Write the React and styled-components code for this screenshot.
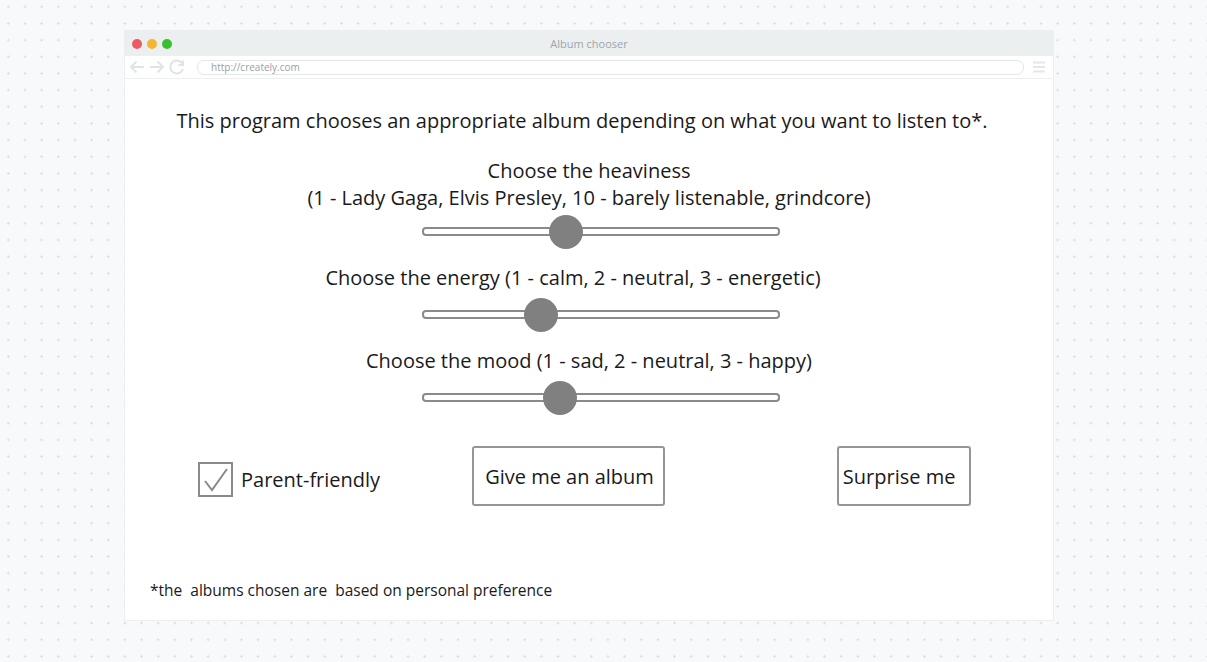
import React from "react";
import styled, { createGlobalStyle } from "styled-components";

const GlobalStyle = createGlobalStyle`
  html, body {
    margin: 0;
    padding: 0;
  }
  body {
    width: 1207px;
    height: 662px;
    overflow: hidden;
    font-family: "Open Sans", "Noto Sans", sans-serif;
    background-color: #f8f9fb;
    background-image: radial-gradient(circle, #dcdfe4 1px, transparent 1.3px);
    background-size: 16.667px 16.667px;
    background-position: 0px -1.5px;
  }
`;

const Page = styled.div`
  padding: 31px 0 0 125px;
`;

const Window = styled.div`
  width: 928px;
  height: 589px;
  background: #fff;
  box-shadow: 0 0 0 1px #eceef0;
  display: flex;
  flex-direction: column;
`;

const TitleBar = styled.div`
  height: 25px;
  background: #eceff0;
  display: flex;
  align-items: center;
  position: relative;
  padding-left: 7px;
  gap: 5px;
`;

const Light = styled.span`
  width: 10px;
  height: 10px;
  border-radius: 50%;
  background: ${(p) => p.$c};
`;

const Title = styled.div`
  position: absolute;
  left: 0;
  right: 0;
  text-align: center;
  font-size: 11px;
  color: #a0a4a6;
`;

const AddressRow = styled.div`
  height: 22px;
  border-bottom: 1px solid #eef0f0;
  display: flex;
  align-items: center;
  padding: 0 7px 0 4px;
  gap: 8px;
`;

const Address = styled.div`
  flex: 1;
  height: 13px;
  border: 1px solid #e3e7e7;
  border-radius: 7px;
  margin-left: 4px;
  font-size: 10px;
  line-height: 13px;
  color: #9aa0a3;
  padding-left: 13px;
`;

const Content = styled.div`
  flex: 1;
  display: flex;
  flex-direction: column;
  align-items: center;
  padding-top: 28px;
  position: relative;
`;

const Intro = styled.p`
  margin: 0 14px 0 0;
  font-size: 20px;
  line-height: 28px;
  color: #1a1a1a;
`;

const Label = styled.p`
  margin: ${(p) => p.$m};
  font-size: 20px;
  line-height: 27px;
  color: #1a1a1a;
  text-align: center;
`;

const Track = styled.div`
  width: 358px;
  height: 9px;
  box-sizing: border-box;
  border: 2px solid #8a8a8a;
  border-radius: 4px;
  position: relative;
  margin: ${(p) => p.$m};
`;

const Thumb = styled.div`
  position: absolute;
  top: 50%;
  width: 34px;
  height: 34px;
  margin: -17px 0 0 -17px;
  border-radius: 50%;
  background: #808080;
`;

const Controls = styled.div`
  align-self: stretch;
  display: flex;
  align-items: center;
  margin-top: 44px;
  padding-left: 73px;
`;

const CheckLabel = styled.label`
  display: flex;
  align-items: center;
  gap: 8px;
  font-size: 20px;
  color: #1a1a1a;
  margin-top: 7px;
`;

const Box = styled.span`
  width: 35px;
  height: 35px;
  box-sizing: border-box;
  border: 2px solid #8a8a8a;
  display: flex;
  align-items: center;
  justify-content: center;
`;

const Button = styled.button`
  height: 60px;
  box-sizing: border-box;
  background: #fff;
  border: 2px solid #959595;
  border-radius: 3px;
  font-family: inherit;
  font-size: 20px;
  color: #1a1a1a;
  padding: 0 ${(p) => p.$pr}px 0 ${(p) => p.$pl}px;
  margin-left: ${(p) => p.$ml}px;
`;

const Footnote = styled.p`
  position: absolute;
  left: 25px;
  bottom: 19px;
  margin: 0;
  font-size: 15.5px;
  color: #1a1a1a;
  white-space: pre;
`;

const Slider = ({ value, m }) => (
  <Track $m={m}>
    <Thumb style={{ left: `${value}%` }} />
  </Track>
);

export default function App() {
  return (
    <>
      <GlobalStyle />
      <Page>
        <Window>
          <TitleBar>
            <Light $c="#ee5a62" />
            <Light $c="#f3b632" />
            <Light $c="#38c02e" />
            <Title>Album chooser</Title>
          </TitleBar>
          <AddressRow>
            <svg width="56" height="16" viewBox="0 0 56 16" fill="none" stroke="#dfe4e4" strokeWidth="2">
              <path d="M15 8H2M7.5 2.5L2 8l5.5 5.5" />
              <path d="M21 8h13M28.5 2.5L34 8l-5.5 5.5" />
              <path d="M54 6A6.5 6.5 0 1 0 54 10M54 1.5V6h-4.5" />
            </svg>
            <Address>http://creately.com</Address>
            <svg width="14" height="12" viewBox="0 0 14 12" fill="#e3e7e7">
              <rect x="1" y="0.5" width="12" height="2" />
              <rect x="1" y="5" width="12" height="2" />
              <rect x="1" y="9.5" width="12" height="2" />
            </svg>
          </AddressRow>
          <Content>
            <Intro>This program chooses an appropriate album depending on what you want to listen to*.</Intro>
            <Label $m="22px 0 0 0">
              Choose the heaviness
              <br />
              (1 - Lady Gaga, Elvis Presley, 10 - barely listenable, grindcore)
            </Label>
            <Slider value={40} m="16px 0 0 24px" />
            <Label $m="28px 32px 0 0">Choose the energy (1 - calm, 2 - neutral, 3 - energetic)</Label>
            <Slider value={33} m="19px 0 0 24px" />
            <Label $m="28px 0 0 0">Choose the mood (1 - sad, 2 - neutral, 3 - happy)</Label>
            <Slider value={38.5} m="19px 0 0 24px" />
            <Controls>
              <CheckLabel>
                <Box>
                  <svg width="28" height="28" viewBox="0 0 28 28" fill="none" stroke="#8a8a8a" strokeWidth="2">
                    <path d="M3 15l7 9L25 3" />
                  </svg>
                </Box>
                Parent-friendly
              </CheckLabel>
              <Button $pl={11} $pr={9} $ml={92}>Give me an album</Button>
              <Button $pl={4} $pr={14} $ml={172}>Surprise me</Button>
            </Controls>
            <Footnote>*the  albums chosen are  based on personal preference</Footnote>
          </Content>
        </Window>
      </Page>
    </>
  );
}
